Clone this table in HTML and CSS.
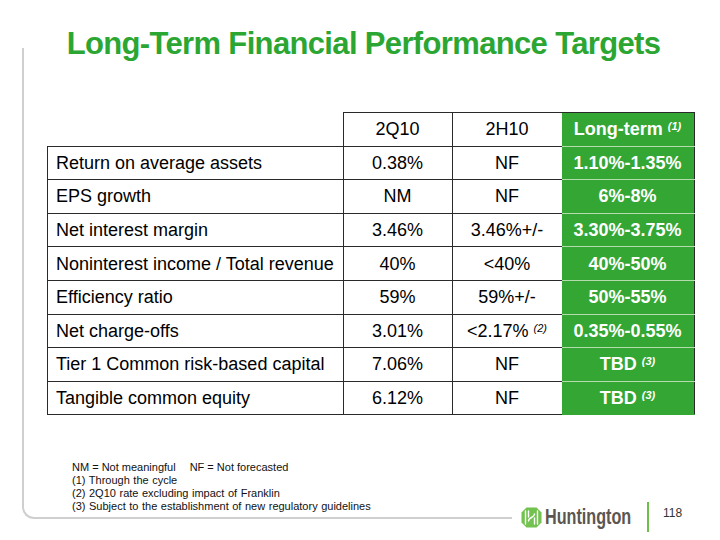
FILE: index.html
```html
<!DOCTYPE html>
<html lang="en">
<head>
<meta charset="utf-8">
<title>Long-Term Financial Performance Targets</title>
<link rel="stylesheet" href="styles.css">
</head>
<body>
<div class="slide">
  <h1 class="title">Long-Term Financial Performance Targets</h1>
  <div class="bottom">
    <div class="panel">
      <table class="targets">
        <tr class="head">
          <th class="blank"></th>
          <th>2Q10</th>
          <th class="c3">2H10</th>
          <th class="lt">Long-term <sup class="fn">(1)</sup></th>
        </tr>
        <tr><td class="label">Return on average assets</td><td>0.38%</td><td class="c3">NF</td><td class="lt">1.10%-1.35%</td></tr>
        <tr><td class="label">EPS growth</td><td>NM</td><td class="c3">NF</td><td class="lt">6%-8%</td></tr>
        <tr><td class="label">Net interest margin</td><td>3.46%</td><td class="c3">3.46%+/-</td><td class="lt">3.30%-3.75%</td></tr>
        <tr><td class="label">Noninterest income / Total revenue</td><td>40%</td><td class="c3">&lt;40%</td><td class="lt">40%-50%</td></tr>
        <tr><td class="label">Efficiency ratio</td><td>59%</td><td class="c3">59%+/-</td><td class="lt">50%-55%</td></tr>
        <tr><td class="label">Net charge-offs</td><td>3.01%</td><td class="c3">&lt;2.17% <sup class="fn2">(2)</sup></td><td class="lt">0.35%-0.55%</td></tr>
        <tr><td class="label">Tier 1 Common risk-based capital</td><td>7.06%</td><td class="c3">NF</td><td class="lt">TBD <sup class="fn">(3)</sup></td></tr>
        <tr class="last"><td class="label">Tangible common equity</td><td>6.12%</td><td class="c3">NF</td><td class="lt">TBD <sup class="fn">(3)</sup></td></tr>
      </table>
      <div class="notes">
        <div class="note first">NM = Not meaningful<span class="gap"></span>NF = Not forecasted</div>
        <div class="note">(1) Through the cycle</div>
        <div class="note">(2) 2Q10 rate excluding impact of Franklin</div>
        <div class="note">(3) Subject to the establishment of new regulatory guidelines</div>
      </div>
    </div>
    <div class="brand">
      <svg class="mark" width="21" height="21" viewBox="0 0 21 21" aria-hidden="true">
        <polygon points="5.5,0.5 15.5,0.5 20.5,5.5 20.5,15.5 15.5,20.5 5.5,20.5 0.5,15.5 0.5,5.5" fill="#72c24f"/>
        <path d="M4.5 4 V17 M7.5 4 V10 M13.5 11 V17 M16.5 4 V17 M7.5 14 C7.5 10 13.5 11 13.5 7" fill="none" stroke="#ffffff" stroke-width="1.4" stroke-linecap="round"/>
      </svg>
      <div class="wordmark"><span>Huntington</span></div>
      <div class="divider"></div>
      <div class="page">118</div>
    </div>
  </div>
</div>
</body>
</html>
```
FILE: styles.css
```css
html, body {
  margin: 0;
  padding: 0;
  background: #ffffff;
}

body {
  font-family: "Liberation Sans", Arial, sans-serif;
  color: #000000;
}

.slide {
  width: 720px;
  height: 540px;
  overflow: hidden;
}

.title {
  margin: 0;
  padding: 26px 0 0 7px;
  font-size: 31px;
  line-height: 36px;
  font-weight: bold;
  color: #2ca632;
  text-align: center;
  letter-spacing: -0.65px;
  white-space: nowrap;
}

.bottom {
  display: flex;
  align-items: flex-end;
  margin-top: -14px;
}

.panel {
  flex: none;
  margin-left: 22px;
  width: 488px;
  padding: 64px 0 4px 0;
  border-left: 2px solid #d0cfcf;
  border-bottom: 2px solid #d0cfcf;
  border-bottom-left-radius: 12px;
}

.targets {
  margin-left: 23px;
  border-collapse: collapse;
  table-layout: fixed;
  width: 644px;
  font-size: 18px;
}

.targets tr {
  height: 33.6px;
}

.targets th,
.targets td {
  padding: 1px 8px 0 8px;
  border: 1px solid #2a2a2a;
  text-align: center;
  font-weight: normal;
  white-space: nowrap;
  vertical-align: middle;
}

.targets th:nth-child(1) { width: 279px; }
.targets th:nth-child(2) { width: 92px; }
.targets th:nth-child(3) { width: 93px; }
.targets th:nth-child(4) { width: 116px; }

.targets .blank {
  border-top: hidden;
  border-left: hidden;
}

.targets td.label {
  text-align: left;
}

.targets .c3 {
  border-right: hidden;
}

.targets .lt {
  background: #34a634;
  color: #ffffff;
  font-weight: bold;
  border-top-color: #b4dcae;
  border-bottom-color: #b4dcae;
  border-left-color: #34a634;
}

.targets .head .lt {
  border-top-color: #2a2a2a;
}

.targets .last .lt {
  border-bottom-color: #34a634;
}

.fn {
  font-size: 11px;
  font-style: italic;
  font-weight: bold;
  vertical-align: 5px;
  line-height: 0;
}

.fn2 {
  font-size: 11px;
  font-style: italic;
  vertical-align: 5px;
  line-height: 0;
}

.notes {
  margin: 46px 0 0 48px;
  font-size: 11px;
  line-height: 13px;
  color: #111111;
  white-space: nowrap;
}

.note {
  word-spacing: 0.5px;
}

.note.first {
  word-spacing: 0;
}

.gap {
  display: inline-block;
  width: 14px;
}

.brand {
  flex: none;
  display: flex;
  align-items: center;
  height: 30px;
  margin: 0 0 -13px 9px;
}

.mark {
  display: block;
  flex: none;
}

.wordmark {
  width: 86px;
  margin-left: 3px;
  height: 22px;
  overflow: visible;
}

.wordmark span {
  display: inline-block;
  font-size: 22px;
  line-height: 22px;
  font-weight: bold;
  color: #5b5650;
  transform: scaleX(0.735);
  transform-origin: left center;
  white-space: nowrap;
}

.divider {
  width: 2px;
  height: 30px;
  margin-left: 16px;
  background: #6cc04a;
}

.page {
  align-self: flex-start;
  margin: 5px 0 0 14px;
  font-size: 12px;
  line-height: 12px;
  color: #333333;
}
```
